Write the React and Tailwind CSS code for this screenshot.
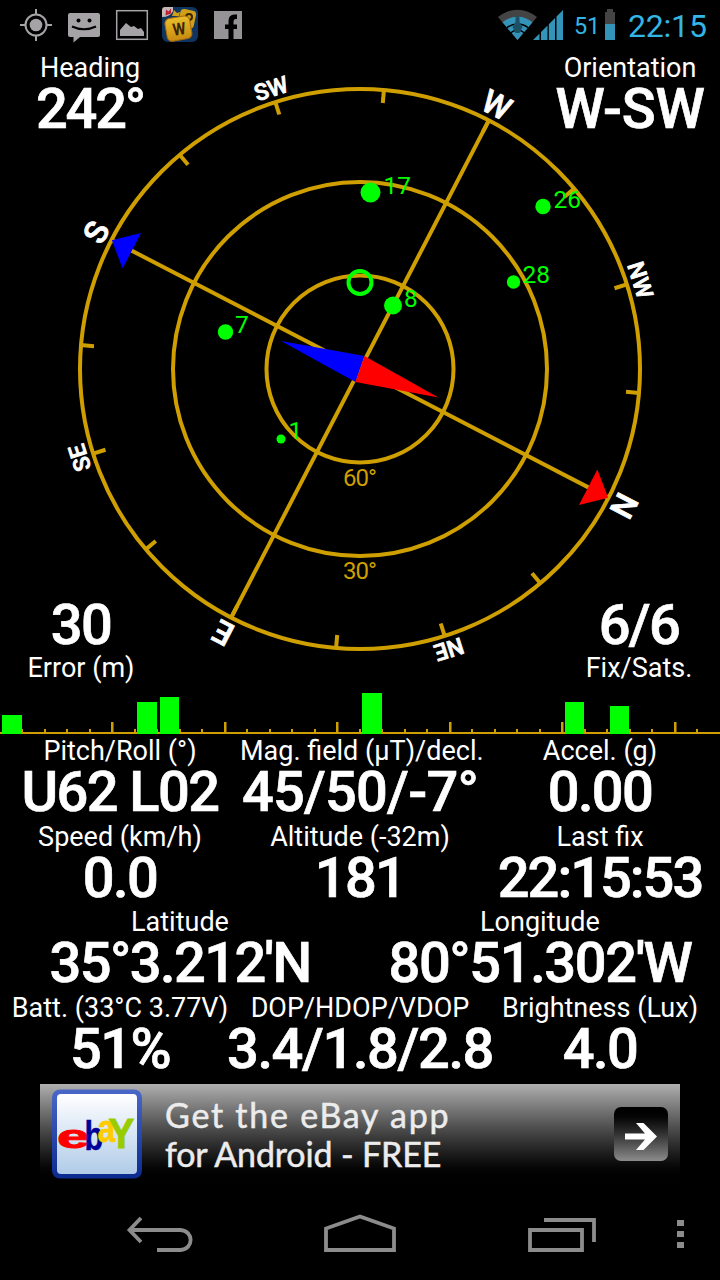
import React from 'react';

const GOLD = '#cf9f00';
const GREEN = '#00ff00';

const satellites = [
  { id: 17, x: 370.5, y: 192.5, r: 10, tx: 383.5, ty: 193.5 },
  { id: 26, x: 543, y: 206.5, r: 7.7, tx: 553.5, ty: 207.5 },
  { id: 28, x: 513.5, y: 282, r: 6.7, tx: 522.5, ty: 282.5 },
  { id: 8, x: 393, y: 305.5, r: 9, tx: 404, ty: 306.5 },
  { id: 7, x: 225.5, y: 332, r: 7.7, tx: 235, ty: 332.5 },
  { id: 1, x: 281, y: 439, r: 4.5, tx: 288.5, ty: 439 },
];

const points = [
  { name: 'N', angle: 0 },
  { name: 'NE', angle: 45 },
  { name: 'E', angle: 90 },
  { name: 'SE', angle: 135 },
  { name: 'S', angle: 180 },
  { name: 'SW', angle: 225 },
  { name: 'W', angle: 270 },
  { name: 'NW', angle: 315 },
];

const signals = [
  { x: 2, w: 20, h: 19 },
  { x: 137, w: 20, h: 32 },
  { x: 160, w: 19, h: 37 },
  { x: 362, w: 20, h: 41 },
  { x: 565, w: 19, h: 32 },
  { x: 610, w: 19, h: 28 },
];

function StatusBar() {
  return (
    <header className="flex h-[50px] items-center">
      <svg className="h-[50px] w-[260px]" viewBox="0 0 260 50">
        {/* GPS */}
        <g stroke="#a5a3a5" fill="none" strokeWidth="2">
          <circle cx="36" cy="25" r="10.5" />
          <path d="M36 9v6M36 35v6M20 25h6M46 25h6" />
          <circle cx="36" cy="25" r="6.3" fill="#a5a3a5" stroke="none" />
        </g>
        {/* Message */}
        <path d="M70 13h28q2 0 2 2v20q0 2-2 2H80l-6.500 5.500V37H70q-2 0-2-2V15q0-2 2-2z" fill="#a5a3a5" />
        <circle cx="78.500" cy="20.500" r="2" />
        <circle cx="89.500" cy="20.500" r="2" />
        <path d="M72 26.500q12 5.500 24 0" stroke="#000" strokeWidth="2" fill="none" />
        {/* Gallery */}
        <rect x="116.700" y="10.700" width="30.600" height="28.600" fill="none" stroke="#a5a3a5" strokeWidth="1.500" />
        <path d="M120 36v-6l6-7 5 4 3-1 4 3 3-1 3 4v4z" fill="#a5a3a5" />
        {/* Word game */}
        <defs>
          <linearGradient id="tile" x1="0" y1="0" x2="0" y2="1">
            <stop offset="0" stopColor="#e8bd2c" />
            <stop offset="1" stopColor="#c98a10" />
          </linearGradient>
        </defs>
        <rect x="162" y="7" width="36" height="35" rx="6" fill="#0f3460" />
        <rect x="179" y="9.500" width="16" height="18" rx="4" fill="#cf9f18" transform="rotate(12 186 19)" />
        <path d="M172 16l2-6 3 3 3-1-1 4z" fill="#cf9f18" />
        <circle cx="189" cy="17" r="3" fill="none" stroke="#3a2500" strokeWidth="2" />
        <path d="M162 15v-5q0-3 3-3h8v4q-3 6-11 6z" fill="#c4b8b8" />
        <path d="M165.500 15.500l.5-6 2.500 2 2.500-3v5z" fill="#c02030" />
        <rect x="166" y="17" width="25" height="23" rx="5" fill="url(#tile)" stroke="#a86a08" transform="rotate(-10 179 29)" />
        <text x="172.500" y="35" fontSize="17" fontWeight="700" fill="#3a2500" transform="rotate(-8 179 29)" textLength="13" lengthAdjust="spacingAndGlyphs">W</text>
        {/* Facebook */}
        <rect x="214" y="11" width="28" height="28" fill="#959395" />
        <path d="M228.500 39V29H225v-4.500h3.500V21q0-6.500 6-6.500h2.500V19h-1.500q-2 0-2 2.500v3h3.500V29h-3.500v10z" fill="#000" />
      </svg>
      <div className="ml-auto flex h-[50px] items-center text-[#33b5e5]">
        <svg className="h-[50px] w-[70px]" viewBox="496 0 70 50">
          <path d="M517.500 40L498 17A30 30 0 0 1 537 17z" fill="#444" />
          <path d="M517.500 40L502.500 22.300A23 23 0 0 1 532.500 22.300z" fill="#3393b8" />
          <path d="M506.500 28A17 17 0 0 1 528.500 28M510.500 33A10.500 10.500 0 0 1 524.500 33" fill="none" stroke="#000" strokeWidth="1.500" />
          <path d="M517.500 14l2 4v4l3 5-3 6h-4l-3-6 3-5v-4z" fill="#1d4f66" />
          <path d="M533 40l6.500-6.500V40zM541 32l6.500-6.500V40H541zM548.800 24.200l6.200-6.200v22h-6.200zM556.500 16.500l6.500-6.500v30h-6.500z" fill="#3393b8" />
        </svg>
        <span className="ml-[8px] mt-[1px] w-[31px] text-[23.5px] leading-[30px] tracking-[-0.3px]">51</span>
        <svg className="h-[50px] w-[10px]" viewBox="0 0 10 50">
          <path d="M0 12h2V9h6v3h2v28H0z" fill="#444" />
          <rect y="24" width="10" height="16" fill="#3393b8" />
        </svg>
        <span className="ml-[13px] mt-[1px] w-[92px] text-[32px] leading-[40px] tracking-[-0.2px]">22:15</span>
      </div>
    </header>
  );
}

function Readout({ label, value, tracking = 'tracking-[-1.6px]', labelFirst = true }) {
  const labelRow = <div className="text-[27px] leading-[32px]">{label}</div>;
  const valueRow = (
    <div className={`flex justify-center text-[56px] font-medium leading-[50px] [-webkit-text-stroke:0.7px_white] ${tracking}`}>
      <span>{value}</span>
    </div>
  );
  return (
    <div className="text-center whitespace-nowrap">
      {labelFirst ? labelRow : <div className="pb-[2px]">{valueRow}</div>}
      {labelFirst ? valueRow : labelRow}
    </div>
  );
}

function Compass() {
  return (
    <svg className="col-start-1 row-start-1 h-[638px] w-[720px]" viewBox="0 50 720 638">
      <g fill="none" stroke={GOLD} strokeWidth="4">
        <circle cx="360" cy="369" r="280" />
        <circle cx="360" cy="369" r="187" />
        <circle cx="360" cy="369" r="93.500" />
      </g>
      <g transform="translate(360 369) rotate(117.4)">
        <path d="M0-280V280M-280 0H280" stroke={GOLD} strokeWidth="4" />
        {Array.from({ length: 16 }, (_, i) => (
          <path key={i} d="M0-280V-267" stroke={GOLD} strokeWidth="4" transform={`rotate(${i * 22.5})`} />
        ))}
        {points.map((p) => (
          <text
            key={p.name}
            y="-286"
            fontSize={p.name.length === 1 ? 32 : 23}
            fontWeight="500"
            fill="#fff"
            stroke="#fff"
            strokeWidth="0.8"
            textAnchor="middle"
            transform={`rotate(${p.angle})`}
          >
            {p.name}
          </text>
        ))}
        <path d="M0-279.500L-20-257H20z" fill="#f00" />
        <path d="M0 279.500L-20 257H20z" fill="#00f" />
      </g>
      <g fill={GOLD} fontSize="24" textAnchor="middle">
        <text x="360" y="485.500" textLength="34">60°</text>
        <text x="360" y="578.500" textLength="34">30°</text>
      </g>
      {/* Magnetic needle */}
      <path d="M281 341L364.500 356 355.500 382z" fill="#00f" />
      <path d="M438.500 397.500L364.500 356 355.500 382z" fill="#f00" />
      <circle cx="360" cy="282.500" r="11.500" fill="none" stroke={GREEN} strokeWidth="4" />
      {satellites.map((s) => (
        <g key={s.id} fill={GREEN}>
          <circle cx={s.x} cy={s.y} r={s.r} />
          <text x={s.tx} y={s.ty} fontSize="24.5">{s.id}</text>
        </g>
      ))}
    </svg>
  );
}

function SignalChart() {
  return (
    <svg className="block h-[47px] w-[720px]" viewBox="0 688 720 47">
      <rect y="732" width="720" height="2" fill={GOLD} />
      {Array.from({ length: 32 }, (_, i) => {
        const major = i % 5 === 0;
        return i > 0 && (
          <rect
            key={i}
            x={Math.floor(i * 22.5) - 1}
            y={major ? 722 : 729}
            width={major ? 2.5 : 2}
            height={major ? 10 : 3}
            fill={GOLD}
          />
        );
      })}
      {signals.map((s) => (
        <rect key={s.x} x={s.x} y={734 - s.h} width={s.w} height={s.h} fill={GREEN} />
      ))}
    </svg>
  );
}

function AdBanner() {
  return (
    <div className="mx-[40px] flex h-[100px] items-center bg-linear-to-b from-[#b0b0b0] to-black pl-[12px] pr-[12px]">
      <svg className="h-[90px] w-[90px]" viewBox="52 1090 90 90" fontFamily="Liberation Sans, sans-serif" fontWeight="700">
        <defs>
          <linearGradient id="frame" x1="0" y1="0" x2="0" y2="1">
            <stop offset="0" stopColor="#4a68c8" />
            <stop offset="1" stopColor="#0a2a90" />
          </linearGradient>
          <linearGradient id="face" x1="0" y1="0" x2="0" y2="1">
            <stop offset="0" stopColor="#fff" />
            <stop offset="1" stopColor="#b0cbe8" />
          </linearGradient>
        </defs>
        <rect x="52" y="1090.500" width="90" height="89" rx="8" fill="url(#frame)" />
        <rect x="57" y="1095" width="80" height="80" rx="4" fill="url(#face)" />
        <text transform="translate(57 1148.500) scale(1.72 1)" fontSize="34" fill="#f00" stroke="#f00" strokeWidth="1">e</text>
        <text transform="translate(84.500 1151) scale(0.75 1)" fontSize="41" fill="#000099" stroke="#000099" strokeWidth="0.5">b</text>
        <text transform="translate(97.500 1142.500) scale(0.82 1)" fontSize="39" fill="#ffcc00" stroke="#ffcc00" strokeWidth="0.8">a</text>
        <text transform="translate(108.500 1148.500) scale(0.92 1)" fontSize="42" fill="#99cc00" stroke="#99cc00" strokeWidth="1">Y</text>
      </svg>
      <div className="ml-[23px] text-[34px] leading-[39px] whitespace-nowrap text-[#ececec] [font-family:Lato,sans-serif] [-webkit-text-stroke:0.5px_#ececec]">
        <div className="tracking-[1.75px]">Get the eBay app</div>
        <div className="tracking-[-0.15px]">for Android - FREE</div>
      </div>
      <div className="ml-auto flex h-[54px] w-[54px] items-center justify-center rounded-[7px] bg-linear-to-b from-black to-[#8c8c8c]">
        <svg className="mt-[5px] h-[29px] w-[32px]" viewBox="0 0 32 29">
          <path d="M0 11.500H20L11 1H18.500L32 14.500 18.500 28H11L20 17.500H0z" fill="#fff" />
        </svg>
      </div>
    </div>
  );
}

function NavBar() {
  return (
    <nav className="flex h-[96px] items-start pt-[28px]">
      <svg className="ml-[124px] h-[44px] w-[72px]" viewBox="124 1212 72 44" fill="none" stroke="#8c8c8c" strokeWidth="3.800">
        <path d="M141 1218L129.500 1230 141 1242M129 1230H180.500C194 1231 194 1249 180.500 1250H157" />
      </svg>
      <svg className="ml-[124px] h-[44px] w-[80px]" viewBox="320 1212 80 44" fill="none" stroke="#8c8c8c" strokeWidth="3.800">
        <path d="M326 1250V1228.500L360 1216.500 394 1228.500V1250z" />
      </svg>
      <svg className="ml-[124px] h-[44px] w-[76px]" viewBox="524 1212 76 44" fill="none" stroke="#8c8c8c" strokeWidth="3.800">
        <path d="M530 1230H582V1250H530zM544 1220H594V1242" />
      </svg>
      <div className="ml-[77px] mt-[8px] flex flex-col gap-[5px]">
        <div className="h-[6px] w-[7px] bg-[#8c8c8c]" />
        <div className="h-[6px] w-[7px] bg-[#8c8c8c]" />
        <div className="h-[6px] w-[7px] bg-[#8c8c8c]" />
      </div>
    </nav>
  );
}

function App() {
  return (
    <div className="h-[1280px] w-[720px] overflow-hidden bg-black text-white [font-family:Roboto,sans-serif]">
      <StatusBar />
      <main>
        <section className="grid h-[638px]">
          <Compass />
          <div className="col-start-1 row-start-1 flex h-[638px] flex-col justify-between pt-[2px] pb-[4px]">
            <div className="flex justify-between">
              <div className="w-[180px]"><Readout label="Heading" value="242°" tracking="tracking-[-2.2px]" /></div>
              <div className="w-[180px]"><Readout label="Orientation" value="W-SW" tracking="tracking-[-0.2px]" /></div>
            </div>
            <div className="flex justify-between">
              <div className="w-[162px]"><Readout label="Error (m)" value="30" labelFirst={false} /></div>
              <div className="w-[162px]"><Readout label="Fix/Sats." value="6/6" labelFirst={false} /></div>
            </div>
          </div>
        </section>
        <SignalChart />
        <section className="grid h-[349px] auto-rows-[85.5px]">
          <div className="grid grid-cols-3">
            <Readout label="Pitch/Roll (°)" value="U62 L02" />
            <Readout label="Mag. field (µT)/decl." value="45/50/-7°" tracking="tracking-[-0.8px]" />
            <Readout label="Accel. (g)" value="0.00" />
          </div>
          <div className="grid grid-cols-3">
            <Readout label="Speed (km/h)" value="0.0" />
            <Readout label="Altitude (-32m)" value="181" />
            <Readout label="Last fix" value="22:15:53" tracking="tracking-[-2px]" />
          </div>
          <div className="grid grid-cols-2">
            <Readout label="Latitude" value="35°3.212'N" />
            <Readout label="Longitude" value="80°51.302'W" tracking="tracking-[-1.4px]" />
          </div>
          <div className="grid grid-cols-3">
            <Readout label="Batt. (33°C 3.77V)" value="51%" />
            <Readout label="DOP/HDOP/VDOP" value="3.4/1.8/2.8" tracking="tracking-[-1.4px]" />
            <Readout label="Brightness (Lux)" value="4.0" />
          </div>
        </section>
      </main>
      <AdBanner />
      <NavBar />
    </div>
  );
}

export default App;
